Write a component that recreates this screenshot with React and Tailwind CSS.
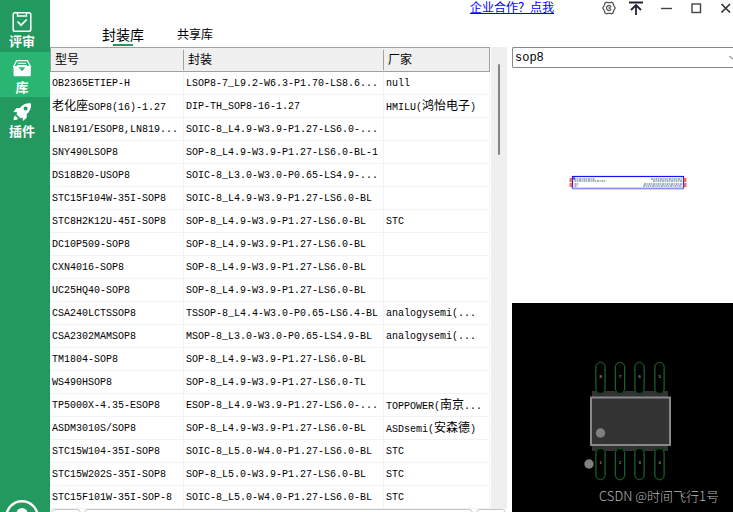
import { useState } from 'react'

const rows = [
  ['OB2365ETIEP-H', 'LSOP8-7_L9.2-W6.3-P1.70-LS8.6...', 'null'],
  ['老化座SOP8(16)-1.27', 'DIP-TH_SOP8-16-1.27', 'HMILU(鸿怡电子)'],
  ['LN8191/ESOP8,LN819...', 'SOIC-8_L4.9-W3.9-P1.27-LS6.0-...', ''],
  ['SNY490LSOP8', 'SOP-8_L4.9-W3.9-P1.27-LS6.0-BL-1', ''],
  ['DS18B20-USOP8', 'SOIC-8_L3.0-W3.0-P0.65-LS4.9-...', ''],
  ['STC15F104W-35I-SOP8', 'SOIC-8_L4.9-W3.9-P1.27-LS6.0-BL', ''],
  ['STC8H2K12U-45I-SOP8', 'SOP-8_L4.9-W3.9-P1.27-LS6.0-BL', 'STC'],
  ['DC10P509-SOP8', 'SOP-8_L4.9-W3.9-P1.27-LS6.0-BL', ''],
  ['CXN4016-SOP8', 'SOP-8_L4.9-W3.9-P1.27-LS6.0-BL', ''],
  ['UC25HQ40-SOP8', 'SOP-8_L4.9-W3.9-P1.27-LS6.0-BL', ''],
  ['CSA240LCTSSOP8', 'TSSOP-8_L4.4-W3.0-P0.65-LS6.4-BL', 'analogysemi(...'],
  ['CSA2302MAMSOP8', 'MSOP-8_L3.0-W3.0-P0.65-LS4.9-BL', 'analogysemi(...'],
  ['TM1804-SOP8', 'SOP-8_L4.9-W3.9-P1.27-LS6.0-BL', ''],
  ['WS490HSOP8', 'SOP-8_L4.9-W3.9-P1.27-LS6.0-TL', ''],
  ['TP5000X-4.35-ESOP8', 'ESOP-8_L4.9-W3.9-P1.27-LS6.0-...', 'TOPPOWER(南京...'],
  ['ASDM3010S/SOP8', 'SOP-8_L4.9-W3.9-P1.27-LS6.0-BL', 'ASDsemi(安森德)'],
  ['STC15W104-35I-SOP8', 'SOIC-8_L5.0-W4.0-P1.27-LS6.0-BL', 'STC'],
  ['STC15W202S-35I-SOP8', 'SOP-8_L5.0-W3.9-P1.27-LS6.0-BL', 'STC'],
  ['STC15F101W-35I-SOP-8', 'SOIC-8_L5.0-W4.0-P1.27-LS6.0-BL', 'STC'],
]

// Latin runs are set at 10px and Chinese runs at 12px, so one hanzi takes two columns.
function CellText({ text }) {
  return text.split(/([\u4e00-\u9fff]+)/).map((part, i) =>
    i % 2 ? <span key={i} className="text-[12px]">{part}</span> : part
  )
}

function ReviewIcon() {
  return (
    <svg className="w-5 h-5" viewBox="0 0 20 20" fill="none" stroke="white">
      <rect x="1.2" y="0.8" width="17.6" height="18.4" rx="1.8" strokeWidth="1.5" />
      <path d="M5.5 1v3h9V1" strokeWidth="1.4" />
      <path d="M5.500 9.500l3.600 3.700 5.600-5.700" strokeWidth="1.700" />
    </svg>
  )
}

function LibraryIcon() {
  return (
    <svg className="w-5 h-5" viewBox="0 0 20 20">
      <path d="M4.500 2.700h11l3 6H1.500z" fill="none" stroke="white" strokeWidth="1.300" strokeLinejoin="round" />
      <path d="M5.800 5.200h8.400M5 7.500h10" stroke="white" strokeWidth="1.100" />
      <path d="M1.500 8.700h5l1.500 2h4l1.500-2h5.300v8.300a1.300 1.300 0 0 1-1.300 1.300H2.800a1.300 1.300 0 0 1-1.300-1.300z" fill="white" />
      <path d="M7.500 10.700h5L10 13z" fill="#29b572" />
    </svg>
  )
}

function PluginIcon() {
  return (
    <svg className="w-5 h-5" viewBox="0 0 20 20" fill="white">
      <path fillRule="evenodd" d="M19 1.400c-4.800-.5-8.500 1-11.200 4.600L4.200 6.300 1.400 10l3.900.3-.8 2.200 4 3.700 2-.8.4 3.600 3.800-3.300.1-3.700c3.200-2.600 4.600-6.100 4.200-10.600zM13.600 4.600a2 2 0 1 1 0 4 2 2 0 0 1 0-4z" />
      <path d="M3.600 13.200c-1.500.6-2 2.600-2.100 5 2.400-.1 4.300-.7 5-2.300L5 16.200l.2-1.500-1.500.3z" />
    </svg>
  )
}

const menu = [
  { id: 'review', label: '评审', Icon: ReviewIcon, box: 'h-[52px] pt-3' },
  { id: 'library', label: '库', Icon: LibraryIcon, box: 'h-[45px] pt-[6px]' },
  { id: 'plugin', label: '插件', Icon: PluginIcon, box: 'h-[45px] pt-[5px]' },
]

function Sidebar() {
  const [active, setActive] = useState('library')
  return (
    <nav className="w-[50px] shrink-0 flex flex-col bg-[#23995f]">
      {menu.map(({ id, label, Icon, box }) => (
        <button
          key={id}
          onClick={() => setActive(id)}
          className={`${box} w-full pr-1.5 flex flex-col items-center gap-[3px] text-white text-[13px] leading-[16px] font-bold ${
            active === id ? 'bg-[#29b572]' : ''
          }`}
        >
          <Icon />
          {label}
        </button>
      ))}
      <button aria-label="用户" className="mt-auto h-3 pl-[5px] overflow-hidden">
        <svg className="w-[34px] h-[34px]" viewBox="0 0 34 34" fill="none">
          <circle cx="17" cy="17" r="15.700" stroke="white" strokeWidth="2.400" />
          <circle cx="17" cy="13.500" r="5.500" fill="white" />
          <path d="M7 27c1-9 19-9 20 0z" fill="white" />
        </svg>
      </button>
    </nav>
  )
}

function WindowBar() {
  return (
    <header className="h-4 flex items-center justify-end">
      <a href="#cooperate" className="pt-0.5 text-[12px] leading-[16px] text-[#0000ff] underline mr-12">企业合作？点我</a>
      <div className="flex items-center gap-[13px] text-[#222]">
        <button aria-label="设置">
          <svg className="w-3.5 h-3.5" viewBox="0 0 14 14" fill="none" stroke="#555" strokeWidth="1.300">
            <path d="M4.300 1.200l1.200.5h3l1.200-.5 1.500 1L11.500 4l1.800 3-1.800 3-.3 1.800-1.500 1-1.200-.5h-3l-1.200.5-1.500-1L2.500 10 .7 7l1.800-3 .3-1.800z" strokeLinejoin="round" />
            <path d="M9.200 8.200A2.500 2.500 0 1 1 9.200 5.800M6.500 7h2.500" />
          </svg>
        </button>
        <button aria-label="置顶">
          <svg className="w-3.5 h-3.5" viewBox="0 0 14 14" fill="none" stroke="#22223a" strokeWidth="1.800">
            <path d="M0 1.500h14M7 14V4M2 9l5-5 5 5" />
          </svg>
        </button>
      </div>
      <div className="flex items-center gap-4 ml-4">
        <button aria-label="最小化">
          <svg className="w-3.5 h-3.5" viewBox="0 0 14 14" stroke="#444" strokeWidth="1.400">
            <path d="M2 7.500h11" />
          </svg>
        </button>
        <button aria-label="最大化">
          <svg className="w-3.5 h-3.5" viewBox="0 0 14 14" fill="none" stroke="#444" strokeWidth="1.400">
            <rect x="3" y="3" width="8.500" height="8.500" />
          </svg>
        </button>
        <button aria-label="关闭">
          <svg className="w-3.5 h-3.5" viewBox="0 0 14 14" stroke="#333" strokeWidth="1.700">
            <path d="M2.500 3l8.500 8.500M11 3l-8.500 8.500" />
          </svg>
        </button>
      </div>
    </header>
  )
}

function PartsTable() {
  return (
    <table className="w-full table-fixed border-separate border-spacing-0 text-black">
      <colgroup>
        <col className="w-[134px]" />
        <col className="w-[200px]" />
        <col />
      </colgroup>
      <thead>
        <tr className="h-[25px] bg-[#f0f0f0] text-[12px] leading-[18px] text-left">
          <th className="p-0 font-normal border-y border-l border-[#a0a0a0]">
            <div className="pt-0.5 pl-1 border-r border-[#a0a0a0]">型号</div>
          </th>
          <th className="p-0 font-normal border-y border-[#a0a0a0]">
            <div className="pt-0.5 pl-1 border-r border-[#a0a0a0]">封装</div>
          </th>
          <th className="p-0 font-normal border-y border-r border-[#a0a0a0]">
            <div className="pt-0.5 pl-1">厂家</div>
          </th>
        </tr>
      </thead>
      <tbody>
        {rows.map(row => (
          <tr key={row[0]} className="h-[23px]">
            {row.map((cell, i) => (
              <td
                key={i}
                className="p-0 pt-0.5 pl-0.5 border-b border-r border-[#f2f2f2] text-[10px] leading-[16px] whitespace-nowrap overflow-hidden"
              >
                <CellText text={cell} />
              </td>
            ))}
          </tr>
        ))}
      </tbody>
    </table>
  )
}

// lengths of the small pin names inside the symbol
const pinNames = [
  { y: 111, left: 20, right: 31 },
  { y: 113, left: 31, right: 29 },
  { y: 116, left: 4, right: 38 },
  { y: 118, left: 3, right: 39 },
]

function SymbolPreview() {
  return (
    <svg className="w-full h-full" viewBox="0 0 221 235" role="img" aria-label="原理图符号">
      <rect x="60.500" y="108.500" width="111" height="12" fill="white" stroke="#1414f5" strokeWidth="1.200" />
      <path d="M60 120.500h112" stroke="#8f8ff0" strokeWidth="1.500" />
      <circle cx="62" cy="110.500" r="1.200" fill="#3b3bd0" />
      {pinNames.map(p => (
        <g key={p.y}>
          <path d={`M57.500 ${p.y}h3M171.500 ${p.y}h3`} stroke="#f04040" strokeWidth="1.300" />
          <path
            d={`M62.500 ${p.y}h${p.left}M${170 - p.right} ${p.y}h${p.right}`}
            stroke="#8296b8"
            strokeWidth="1.300"
            strokeDasharray="2 0.600 1.200 0.700"
          />
        </g>
      ))}
    </svg>
  )
}

const pads = [
  { x: 88.500, top: '8', bottom: '1' },
  { x: 108, top: '7', bottom: '2' },
  { x: 127.500, top: '6', bottom: '3' },
  { x: 147.500, top: '5', bottom: '4' },
]

function FootprintPreview() {
  return (
    <svg className="w-full h-full" viewBox="0 0 221 209" role="img" aria-label="封装焊盘">
      <rect x="80" y="88" width="76" height="60" fill="#333" />
      <rect x="79" y="94.500" width="79" height="47.500" fill="#333" stroke="#888" strokeWidth="2" />
      <circle cx="88.500" cy="130" r="4.700" fill="#808080" />
      <circle cx="77" cy="161" r="4.700" fill="#808080" />
      {pads.map(p => (
        <g key={p.x} fill="black" strokeWidth="1">
          <rect x={p.x - 5} y="59" width="10" height="32" rx="5" stroke="#1c1c40" />
          <rect x={p.x - 4.500} y="59.500" width="9" height="31" rx="4.500" stroke="#0f6a18" />
          <rect x={p.x - 5} y="145" width="10" height="32" rx="5" stroke="#1c1c40" />
          <rect x={p.x - 4.500} y="145.500" width="9" height="31" rx="4.500" stroke="#0f6a18" />
          <g fill="#d0d0d0" fontSize="4" textAnchor="middle" fontFamily="Liberation Sans, sans-serif">
            <text x={p.x} y="75">{p.top}</text>
            <text x={p.x} y="161">{p.bottom}</text>
          </g>
        </g>
      ))}
    </svg>
  )
}

function SearchBox() {
  return (
    <div className="relative">
      <select
        aria-label="搜索"
        defaultValue="sop8"
        className="block w-full h-[21px] pl-0.5 appearance-none rounded-l-[2px] border border-r-0 border-[#888] bg-white text-[12px] leading-[16px] text-black"
      >
        <option value="sop8">sop8</option>
      </select>
      <svg className="absolute right-0 top-2 w-1 h-1.5 pointer-events-none" viewBox="0 0 4 6" fill="none" stroke="#555">
        <path d="M0.500 1l3.500 3.500" />
      </svg>
    </div>
  )
}

export default function App() {
  const [tab, setTab] = useState('package')
  const tabs = [
    { id: 'package', label: '封装库' },
    { id: 'shared', label: '共享库' },
  ]

  return (
    <div className="h-screen flex overflow-hidden bg-white font-['Liberation_Mono','Noto_Sans_CJK_SC',monospace]">
      <Sidebar />
      <div className="flex-1 min-w-0 flex flex-col">
        <WindowBar />
        <div className="h-[31px] shrink-0 pl-[52px] flex items-end gap-[33px] text-black">
          {tabs.map(t => (
            <button
              key={t.id}
              onClick={() => setTab(t.id)}
              className={`flex flex-col items-center leading-[16px] ${tab === t.id ? 'text-[14px]' : 'text-[12px]'}`}
            >
              {t.label}
              <span className={`w-5 h-0.5 mb-px ${tab === t.id ? 'bg-[#23995f]' : ''}`} />
            </button>
          ))}
        </div>

        <main className="flex-1 min-h-0 grid grid-cols-[462fr_221fr] grid-rows-[minmax(0,1fr)]">
          <section className="min-w-0 flex flex-col">
            <div className="flex shrink-0">
              <div className="flex-1 min-w-0">
                <PartsTable />
              </div>
              {/* scrollbar */}
              <div className="w-4 ml-px mr-[5px] bg-[#efefef] pt-[17px]">
                <div className="w-0.5 h-[91px] mx-auto rounded-full bg-[#858585]" />
              </div>
            </div>
            {/* pager */}
            <div className="flex gap-[3px] pl-px pr-[6px] shrink-0">
              <button aria-label="上一页" className="w-[30px] h-6 rounded border border-[#c4c4c4]" />
              <button aria-label="页码" className="flex-1 h-6 rounded border border-[#c4c4c4]" />
              <button aria-label="下一页" className="w-[30px] h-6 rounded border border-[#c4c4c4]" />
            </div>
          </section>

          <aside className="min-w-0 flex flex-col">
            <SearchBox />
            <div className="flex-[235] min-h-0">
              <SymbolPreview />
            </div>
            <div className="relative flex-[209] min-h-0 bg-black">
              <FootprintPreview />
              <p className="absolute right-3.5 bottom-1.5 text-[13px] leading-[20px] font-light text-[#b8b8b8] whitespace-nowrap font-['Noto_Sans_CJK_SC',sans-serif]">
                CSDN @时间飞行1号
              </p>
            </div>
          </aside>
        </main>
      </div>
    </div>
  )
}
